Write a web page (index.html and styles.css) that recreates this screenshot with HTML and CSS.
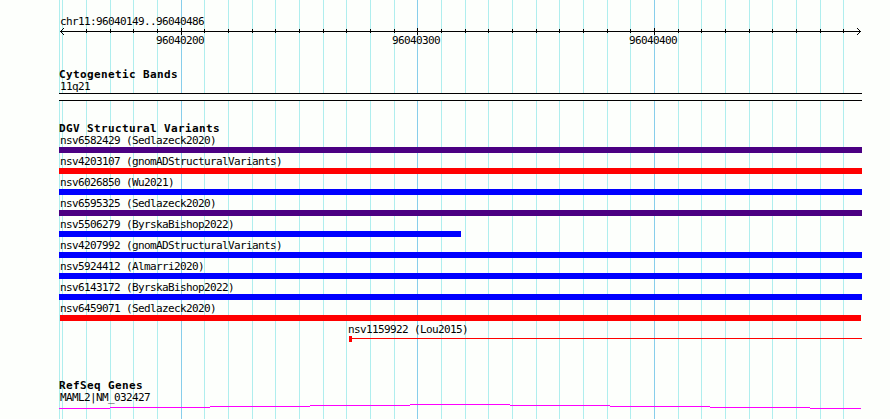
FILE: index.html
```
<!DOCTYPE html>
<html lang="en">
<head>
    <meta charset="UTF-8">
    <title>chr11:96040149..96040486</title>
    <link rel="stylesheet" href="styles.css">
</head>
<body>
    <div class="browser">
        <svg class="grid" width="890" height="419">
            <path class="minor" d="M59.5 0v419M62.5 0v419M86.5 0v419M110.5 0v419M133.5 0v419M157.5 0v419M204.5 0v419M228.5 0v419M252.5 0v419M275.5 0v419M299.5 0v419M323.5 0v419M346.5 0v419M370.5 0v419M394.5 0v419M441.5 0v419M465.5 0v419M488.5 0v419M512.5 0v419M536.5 0v419M559.5 0v419M583.5 0v419M607.5 0v419M630.5 0v419M678.5 0v419M701.5 0v419M725.5 0v419M749.5 0v419M772.5 0v419M796.5 0v419M820.5 0v419M843.5 0v419"/>
            <path class="major" d="M181.5 0v419M417.5 0v419M654.5 0v419"/>
        </svg>

        <div class="tracks">
            <div class="track ruler">
                <div class="label">chr11:96040149..96040486</div>
                <svg width="803" height="18">
                    <path class="axis" d="M1 3.5h801M4.5 0v1M3.5 1v1M2.5 2v1M1.5 3v1M2.5 4v1M3.5 5v1M4.5 6v1M798.5 0v1M799.5 1v1M800.5 2v1M801.5 3v1M800.5 4v1M799.5 5v1M798.5 6v1"/>
                    <path class="axis" d="M27.5 1v4M51.5 1v4M74.5 1v4M98.5 1v4M145.5 1v4M169.5 1v4M193.5 1v4M216.5 1v4M240.5 1v4M264.5 1v4M287.5 1v4M311.5 1v4M335.5 1v4M382.5 1v4M406.5 1v4M429.5 1v4M453.5 1v4M477.5 1v4M500.5 1v4M524.5 1v4M548.5 1v4M571.5 1v4M619.5 1v4M642.5 1v4M666.5 1v4M690.5 1v4M713.5 1v4M737.5 1v4M761.5 1v4M784.5 1v4"/>
                    <path class="axis" d="M122.5 0v7M358.5 0v7M595.5 0v7"/>
                    <text x="97" y="16">96040200</text>
                    <text x="333" y="16">96040300</text>
                    <text x="570" y="16">96040400</text>
                </svg>
            </div>

            <div class="track bands">
                <h3>Cytogenetic Bands</h3>
                <div class="label">11q21</div>
                <div class="band"></div>
            </div>

            <div class="track variants">
                <h3>DGV Structural Variants</h3>
                <div class="label">nsv6582429 (Sedlazeck2020)</div>
                <div class="bar indigo"></div>
                <div class="label">nsv4203107 (gnomADStructuralVariants)</div>
                <div class="bar red"></div>
                <div class="label">nsv6026850 (Wu2021)</div>
                <div class="bar blue"></div>
                <div class="label">nsv6595325 (Sedlazeck2020)</div>
                <div class="bar indigo"></div>
                <div class="label">nsv5506279 (ByrskaBishop2022)</div>
                <div class="bar blue half"></div>
                <div class="label">nsv4207992 (gnomADStructuralVariants)</div>
                <div class="bar blue"></div>
                <div class="label">nsv5924412 (Almarri2020)</div>
                <div class="bar blue"></div>
                <div class="label">nsv6143172 (ByrskaBishop2022)</div>
                <div class="bar blue"></div>
                <div class="label">nsv6459071 (Sedlazeck2020)</div>
                <div class="bar red inner"></div>
                <div class="partial">
                    <div class="label">nsv1159922 (Lou2015)</div>
                    <div class="segment">
                        <div class="block"></div>
                        <div class="line"></div>
                    </div>
                </div>
            </div>

            <div class="track genes">
                <h3>RefSeq Genes</h3>
                <div class="label">MAML2|NM_032427</div>
                <svg width="803" height="5">
                    <path class="intron" d="M0 4.5h51M51 3.5h100M151 2.5h100M251 1.5h100M351 .5h100M451 1.5h100M551 2.5h100M651 3.5h100M751 4.5h51"/>
                </svg>
            </div>
        </div>
    </div>
</body>
</html>
```
FILE: styles.css
```
* {
    margin: 0;
    padding: 0;
    box-sizing: border-box;
}

body {
    background: #fdfffc;
    color: #000;
    font-family: "DejaVu Sans Mono", monospace;
    font-size: 11px;
    overflow: hidden;
}

svg {
    display: block;
    shape-rendering: crispEdges;
}

.browser {
    position: relative;
    width: 890px;
    height: 419px;
    overflow: hidden;
}

/* guide lines behind every track */
.grid {
    position: absolute;
    top: 0;
    left: 0;
}

.minor {
    stroke: #afeeee;
}

.major {
    stroke: #87ceeb;
}

.tracks {
    position: relative;
    width: 803px;
    margin-left: 59px;
    padding-top: 13px;
}

h3 {
    height: 12px;
    line-height: 17px;
    font-size: 11px;
    font-weight: bold;
    letter-spacing: 0.38px;
    white-space: pre;
}

.label {
    height: 15px;
    padding-left: 1px;
    line-height: 17px;
    letter-spacing: -0.62px;
    white-space: pre;
}

.ruler text {
    font-size: 11px;
    letter-spacing: -0.62px;
}

.axis {
    stroke: #000;
}

.bands {
    margin-top: 20px;
}

.band {
    height: 8px;
    background: #fdfffc;
    border-top: 1px solid #000;
    border-bottom: 1px solid #000;
}

.variants {
    margin-top: 19px;
}

.bar {
    height: 6px;
}

.indigo {
    background: #4b0082;
}

.red {
    background: #ff0000;
}

.blue {
    background: #0000ff;
}

.half {
    width: 402px;
}

.inner {
    margin: 0 1px;
}

.partial {
    margin-left: 288px;
}

.segment {
    display: flex;
    height: 6px;
    padding-left: 2px;
}

.block {
    width: 3px;
    background: #ff0000;
}

.line {
    flex: 1;
    height: 1px;
    margin-top: 2px;
    background: #ff0000;
}

.genes {
    margin-top: 35px;
}

.intron {
    stroke: #ff00ff;
}
```
